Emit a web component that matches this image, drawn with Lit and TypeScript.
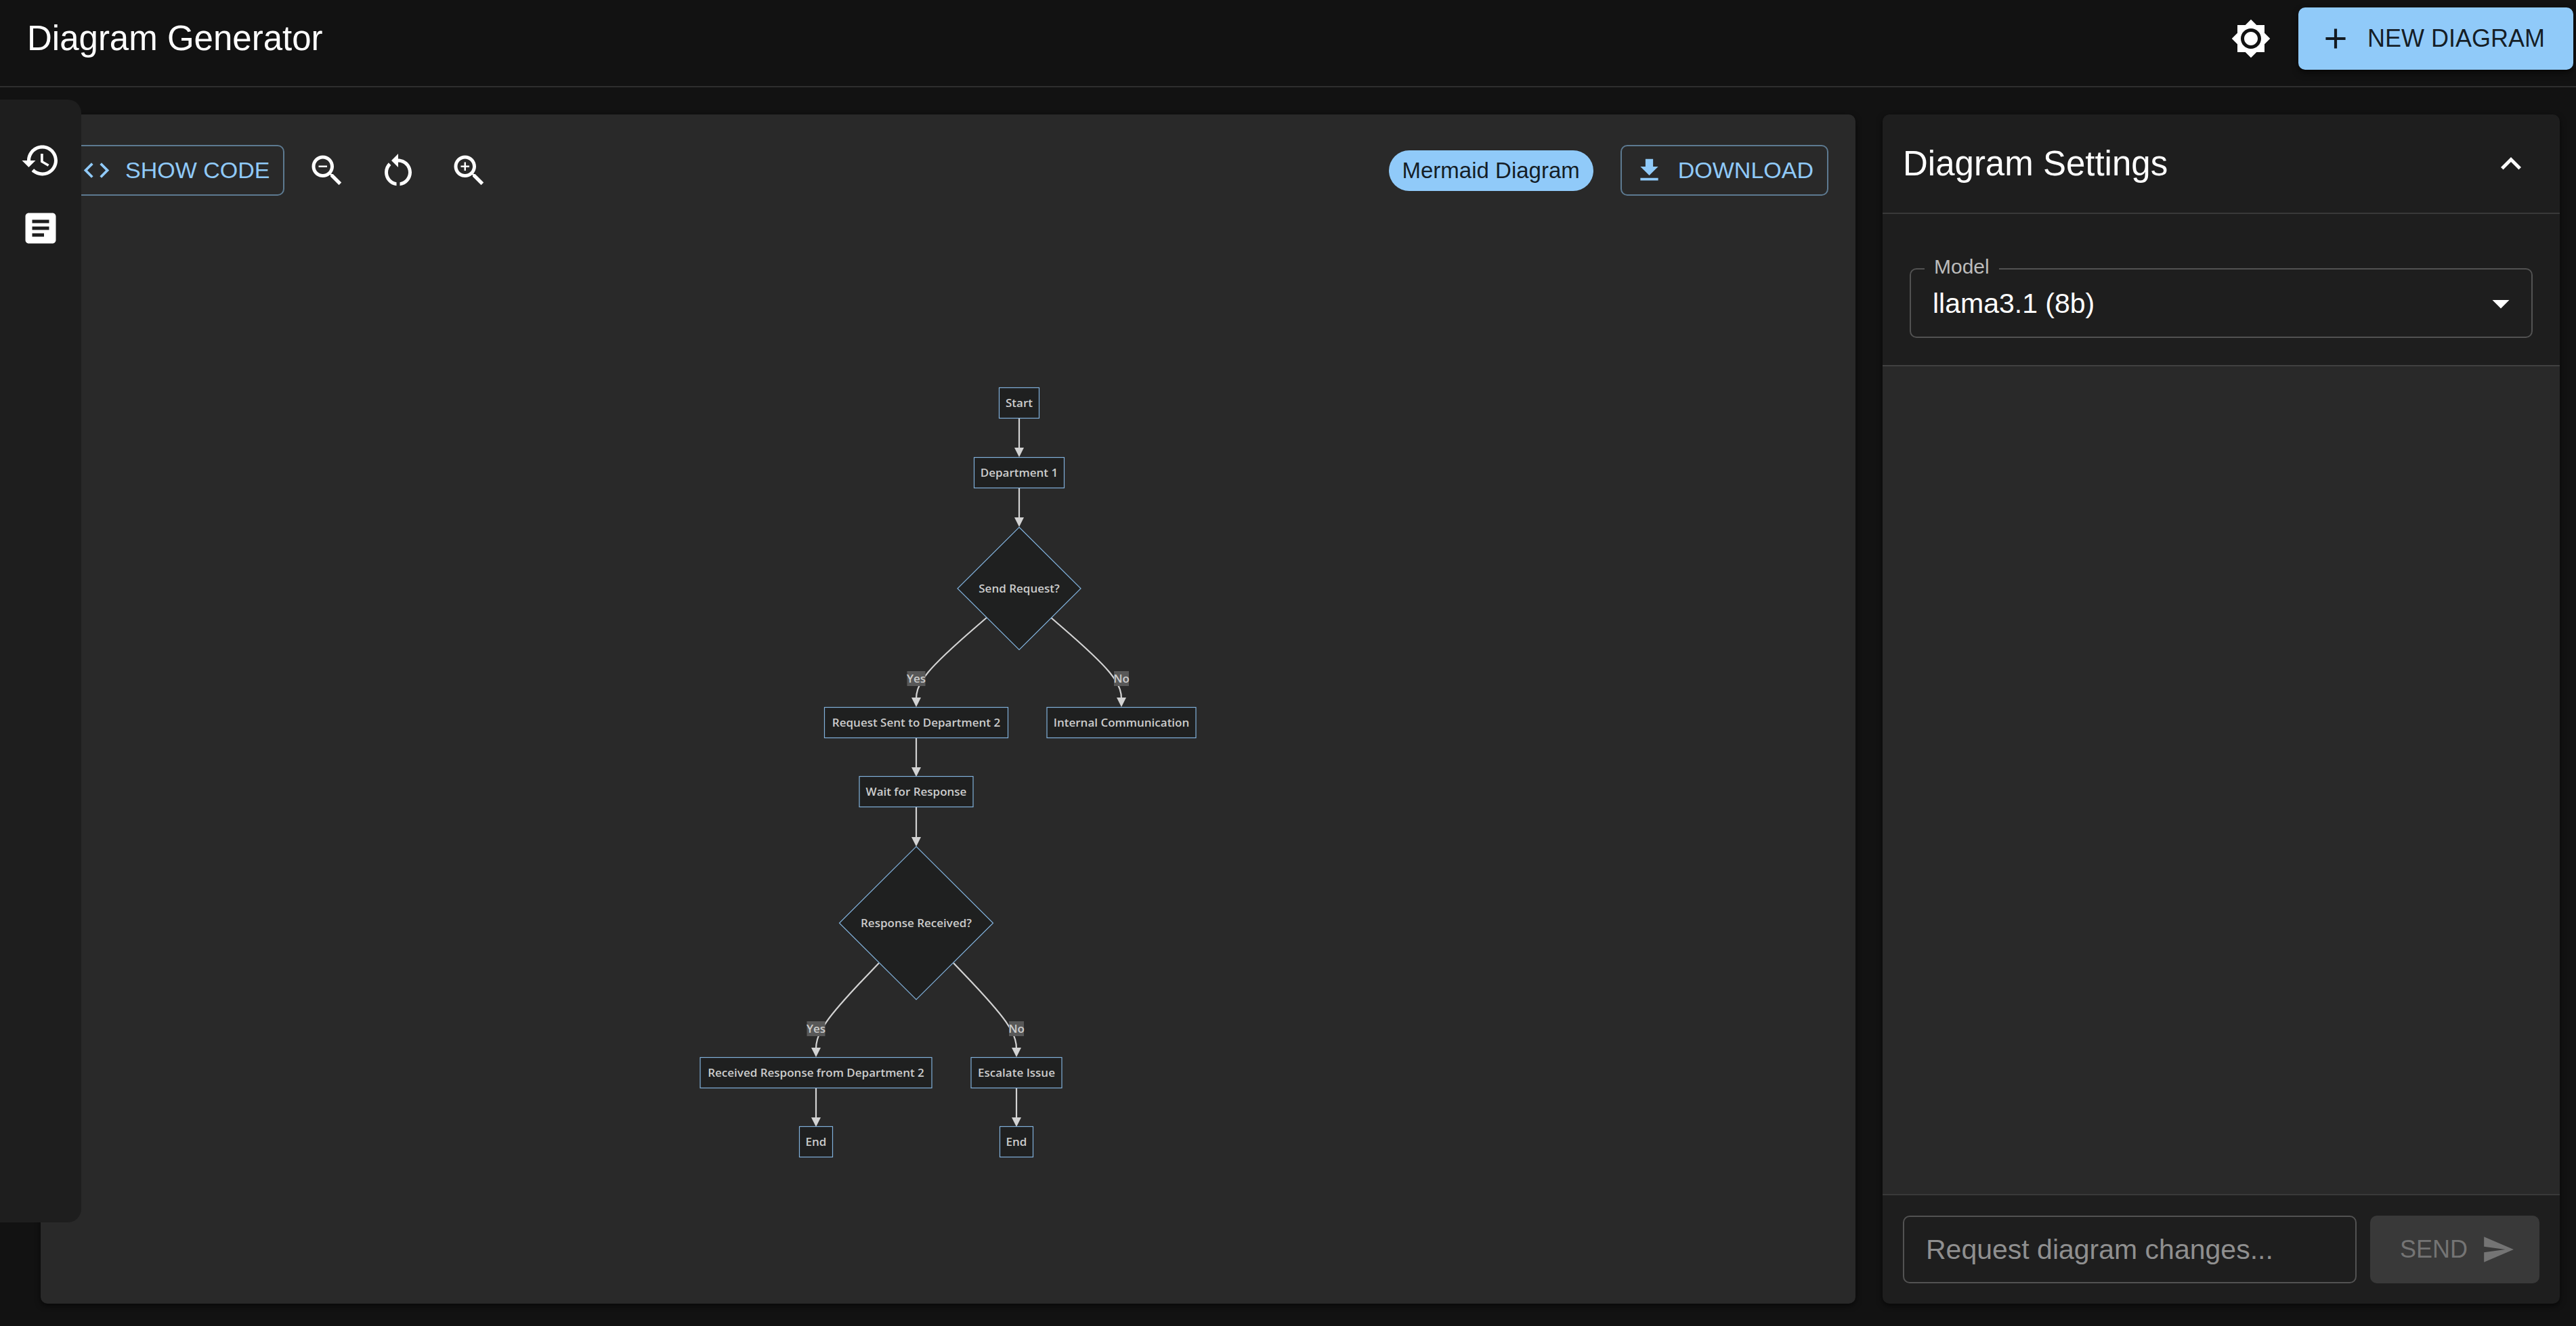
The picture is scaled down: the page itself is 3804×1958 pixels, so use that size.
import { LitElement, html, svg, css } from "lit";
import { customElement, property, state } from "lit/decorators.js";

const ICONS: Record<string, string> = {
  sun: "M20 8.69V4h-4.69L12 .69 8.69 4H4v4.69L.69 12 4 15.31V20h4.69L12 23.31 15.31 20H20v-4.69L23.31 12 20 8.69zM12 18c-3.31 0-6-2.69-6-6s2.69-6 6-6 6 2.69 6 6-2.69 6-6 6zm0-10c-2.21 0-4 1.79-4 4s1.79 4 4 4 4-1.79 4-4-1.79-4-4-4z",
  add: "M19 13h-6v6h-2v-6H5v-2h6V5h2v6h6v2z",
  history:
    "M13 3c-4.97 0-9 4.03-9 9H1l3.89 3.89.07.14L9 12H6c0-3.87 3.13-7 7-7s7 3.13 7 7-3.13 7-7 7c-1.93 0-3.68-.79-4.94-2.06l-1.42 1.42C8.27 19.99 10.51 21 13 21c4.97 0 9-4.03 9-9s-4.03-9-9-9zm-1 5v5l4.28 2.54.72-1.21-3.5-2.08V8H12z",
  article:
    "M19 3H5c-1.1 0-2 .9-2 2v14c0 1.1.9 2 2 2h14c1.1 0 2-.9 2-2V5c0-1.1-.9-2-2-2zm-5 14H7v-2h7v2zm3-4H7v-2h10v2zm0-4H7V7h10v2z",
  code: "M9.4 16.6 4.8 12l4.6-4.6L8 6l-6 6 6 6 1.4-1.4zm5.2 0 4.6-4.6-4.6-4.6L16 6l6 6-6 6-1.4-1.4z",
  zoomOut:
    "M15.5 14h-.79l-.28-.27C15.41 12.59 16 11.11 16 9.5 16 5.91 13.09 3 9.5 3S3 5.91 3 9.5 5.91 16 9.5 16c1.61 0 3.09-.59 4.23-1.57l.27.28v.79l5 4.99L20.49 19l-4.99-5zm-6 0C7.01 14 5 11.99 5 9.5S7.01 5 9.5 5 14 7.01 14 9.5 11.99 14 9.5 14zM7 9h5v1H7z",
  reset:
    "M12 5V2L8 6l4 4V7c3.31 0 6 2.69 6 6 0 2.97-2.17 5.43-5 5.91v2.02c3.95-.49 7-3.85 7-7.93 0-4.42-3.58-8-8-8zM6 13c0-1.65.67-3.15 1.76-4.24L6.34 7.34C4.9 8.79 4 10.79 4 13c0 4.08 3.05 7.44 7 7.93v-2.02c-2.83-.48-5-2.94-5-5.91z",
  zoomIn:
    "M15.5 14h-.79l-.28-.27C15.41 12.59 16 11.11 16 9.5 16 5.91 13.09 3 9.5 3S3 5.91 3 9.5 5.91 16 9.5 16c1.61 0 3.09-.59 4.23-1.57l.27.28v.79l5 4.99L20.49 19l-4.99-5zm-6 0C7.01 14 5 11.99 5 9.5S7.01 5 9.5 5 14 7.01 14 9.5 11.99 14 9.5 14zm2.5-4h-2v2H9v-2H7V9h2V7h1v2h2v1z",
  download: "M19 9h-4V3H9v6H5l7 7 7-7zM5 18v2h14v-2H5z",
  chevronUp: "M12 8l-6 6 1.41 1.41L12 10.83l4.59 4.58L18 14z",
  dropDown: "M7 10l5 5 5-5z",
  send: "M2.01 21L23 12 2.01 3 2 10l15 2-15 2z",
};

const icon = (name: string, size = "") => html`
  <svg class="icon ${size}" viewBox="0 0 24 24" aria-hidden="true">
    <path d=${ICONS[name]}></path>
  </svg>
`;

type Point = [number, number];

interface FlowNode {
  label: string;
  shape: "box" | "diamond";
  x: number;
  y: number;
  width: number;
  height: number;
}

const NODES: FlowNode[] = [
  { label: "Start", shape: "box", x: 475, y: 25, width: 59, height: 45 },
  { label: "Department 1", shape: "box", x: 475, y: 128, width: 133, height: 45 },
  { label: "Send Request?", shape: "diamond", x: 475, y: 299, width: 182, height: 181 },
  { label: "Request Sent to Department 2", shape: "box", x: 323, y: 497, width: 271, height: 45 },
  { label: "Internal Communication", shape: "box", x: 626, y: 497, width: 220, height: 45 },
  { label: "Wait for Response", shape: "box", x: 323, y: 599, width: 168, height: 45 },
  { label: "Response Received?", shape: "diamond", x: 323, y: 793, width: 227, height: 226 },
  { label: "Received Response from Department 2", shape: "box", x: 175, y: 1014, width: 342, height: 45 },
  { label: "Escalate Issue", shape: "box", x: 471, y: 1014, width: 134, height: 45 },
  { label: "End", shape: "box", x: 175, y: 1116, width: 49, height: 45 },
  { label: "End", shape: "box", x: 471, y: 1116, width: 49, height: 45 },
];

const STRAIGHT: [Point, Point][] = [
  [[475, 48], [475, 105]],
  [[475, 151], [475, 208]],
  [[323, 520], [323, 577]],
  [[323, 622], [323, 680]],
  [[175, 1036], [175, 1094]],
  [[471, 1036], [471, 1094]],
];

const BRANCHES: { label: string; width: number; points: [Point, Point, Point] }[] = [
  { label: "Yes", width: 27, points: [[427, 342], [323, 432], [323, 474]] },
  { label: "No", width: 22, points: [[522, 342], [626, 432], [626, 474]] },
  { label: "Yes", width: 27, points: [[268, 852], [175, 949], [175, 991]] },
  { label: "No", width: 22, points: [[378, 852], [471, 949], [471, 991]] },
];

/* Uniform B-spline through three control points. */
const basis = ([a, b, c]: Point[]) => {
  const mix = (...terms: [number, Point][]) => {
    const total = terms.reduce((sum, [k]) => sum + k, 0);
    return [0, 1].map((i) => terms.reduce((sum, [k, p]) => sum + k * p[i], 0) / total).join(" ");
  };
  return (
    `M${a.join(" ")} L${mix([5, a], [1, b])}` +
    ` C${mix([2, a], [1, b])} ${mix([1, a], [2, b])} ${mix([1, a], [4, b], [1, c])}` +
    ` C${mix([2, b], [1, c])} ${mix([1, b], [2, c])} ${mix([1, b], [5, c])} L${c.join(" ")}`
  );
};

@customElement("flow-chart")
export class FlowChart extends LitElement {
  static styles = css`
    :host {
      display: block;
    }
    .chart {
      display: block;
      width: 740px;
      max-width: 100%;
    }
    .shape {
      fill: #1f2020;
      stroke: #81b1db;
      stroke-width: 1.2;
    }
    .edge {
      fill: none;
      stroke: #d3d3d3;
      stroke-width: 2.2;
    }
    .head {
      fill: #d3d3d3;
    }
    .label-bg {
      fill: #585858;
    }
    .text {
      fill: #cccccc;
      font: 600 17px "Open Sans", "Noto Sans", sans-serif;
      text-anchor: middle;
    }
  `;

  private edge(path: string, [x, y]: Point) {
    return svg`
      <path class="edge" d=${path}></path>
      <path class="head" d=${`M${x - 7} ${y - 14} h14 L${x} ${y} z`}></path>
    `;
  }

  private node(n: FlowNode) {
    const w = n.width / 2;
    const h = n.height / 2;
    const shape =
      n.shape === "box"
        ? svg`<rect class="shape" x=${n.x - w} y=${n.y - h} width=${n.width} height=${n.height}></rect>`
        : svg`<polygon class="shape" points=${`${n.x},${n.y - h} ${n.x + w},${n.y} ${n.x},${n.y + h} ${n.x - w},${n.y}`}></polygon>`;
    return svg`<g>${shape}<text class="text" x=${n.x} y=${n.y + 6}>${n.label}</text></g>`;
  }

  render() {
    return html`
      <svg class="chart" viewBox="0 0 740 1142" role="img" aria-label="Flowchart">
        ${STRAIGHT.map(([a, b]) => this.edge(`M${a.join(" ")} L${b[0]} ${b[1] - 8}`, b))}
        ${BRANCHES.map(({ points: [a, b, c] }) => this.edge(basis([a, b, [c[0], c[1] - 6]]), c))}
        ${BRANCHES.map(
          ({ label, width, points: [, [x, y]] }) => svg`
            <rect class="label-bg" x=${x - width / 2} y=${y - 11} width=${width} height="22"></rect>
            <text class="text" x=${x} y=${y + 6}>${label}</text>
          `,
        )}
        ${NODES.map((n) => this.node(n))}
      </svg>
    `;
  }
}

@customElement("app-root")
export class AppRoot extends LitElement {
  @property() heading = "Diagram Generator";
  @state() private request = "";

  static styles = css`
    :host {
      display: flex;
      flex-direction: column;
      min-height: 100vh;
      background: #121212;
      color: #ffffff;
      font-family: "Liberation Sans", Arial, sans-serif;
    }
    * {
      box-sizing: border-box;
    }
    button,
    input,
    select {
      font: inherit;
      color: inherit;
      margin: 0;
    }
    button {
      display: inline-flex;
      align-items: center;
      justify-content: center;
      flex: none;
      padding: 0;
      border: 0;
      background: none;
      white-space: nowrap;
      cursor: pointer;
    }
    .icon {
      display: block;
      flex: none;
      width: 60px;
      height: 60px;
      fill: currentColor;
    }
    .icon.medium {
      width: 50px;
      height: 50px;
    }
    .icon.small {
      width: 45px;
      height: 45px;
    }
    .title {
      margin: 0;
      font-size: 51px;
      font-weight: 400;
      line-height: 80px;
    }

    .header {
      display: flex;
      align-items: center;
      gap: 20px;
      padding: 7px 4px 20px 40px;
      border-bottom: 2px solid #2e2e2e;
    }
    .header .title {
      flex: 1;
    }
    .round {
      width: 100px;
      height: 100px;
      border-radius: 50%;
    }
    .round.compact {
      width: 85px;
      height: 85px;
    }
    .primary {
      gap: 22px;
      height: 92px;
      padding: 0 42px 0 30px;
      border-radius: 10px;
      background: #90caf9;
      color: rgba(0, 0, 0, 0.87);
      font-size: 36px;
      box-shadow: 0 5px 10px rgba(0, 0, 0, 0.5);
    }

    .body {
      display: grid;
      flex: 1;
    }
    .rail {
      grid-area: 1 / 1;
      z-index: 1;
      justify-self: start;
      display: flex;
      flex-direction: column;
      align-items: center;
      width: 120px;
      margin: 18px 0 153px;
      padding-top: 40px;
      border-radius: 0 20px 20px 0;
      background: #1e1e1e;
    }
    .workspace {
      grid-area: 1 / 1;
      display: flex;
      gap: 40px;
      padding: 40px 24px 33px 60px;
    }
    .canvas,
    .settings {
      display: flex;
      flex-direction: column;
      border-radius: 10px;
      box-shadow: 0 3px 8px rgba(0, 0, 0, 0.6);
    }
    .canvas {
      flex: 1;
      min-width: 0;
      background: #292929;
    }
    .toolbar {
      display: flex;
      align-items: center;
      gap: 20px;
      padding: 40px 40px 0;
    }
    .outlined {
      gap: 20px;
      height: 75px;
      padding: 0 20px 0 18px;
      border: 2px solid #5d7a91;
      border-radius: 10px;
      color: #90caf9;
      font-size: 34px;
    }
    .export {
      display: flex;
      align-items: center;
      gap: 40px;
      margin-left: auto;
    }
    .chip {
      padding: 0 20px;
      border-radius: 30px;
      background: #90caf9;
      color: rgba(0, 0, 0, 0.87);
      font-size: 33px;
      line-height: 60px;
      white-space: nowrap;
    }
    .stage {
      flex: 1;
      display: flex;
      align-items: center;
      justify-content: center;
      padding-top: 63px;
    }

    .settings {
      width: 1000px;
      flex: none;
      background: #1e1e1e;
    }
    .settings-head {
      display: flex;
      align-items: center;
      justify-content: space-between;
      padding: 30px;
      border-bottom: 2px solid #393939;
    }
    .model {
      padding: 80px 40px 40px;
      border-bottom: 2px solid #414141;
    }
    .field {
      position: relative;
      display: flex;
      align-items: center;
      justify-content: flex-end;
    }
    .field-label {
      position: absolute;
      top: -20px;
      left: 22px;
      padding: 0 14px;
      background: #1e1e1e;
      color: #bcbcbc;
      font-size: 30px;
      line-height: 36px;
    }
    .select {
      width: 100%;
      height: 103px;
      padding: 0 80px 0 32px;
      border: 2px solid #525252;
      border-radius: 10px;
      background: transparent;
      appearance: none;
      font-size: 41px;
    }
    .field .icon {
      position: absolute;
      right: 17px;
      pointer-events: none;
    }
    .messages {
      flex: 1;
      background: #292929;
    }
    .composer {
      display: flex;
      gap: 20px;
      padding: 30px;
      border-top: 2px solid #393939;
    }
    .request {
      flex: 1;
      min-width: 0;
      height: 100px;
      padding: 0 32px;
      border: 2px solid #525252;
      border-radius: 10px;
      background: transparent;
      font-size: 41px;
    }
    .request::placeholder {
      color: #8f8f8f;
      opacity: 1;
    }
    .send {
      gap: 20px;
      width: 250px;
      padding-left: 8px;
      border-radius: 10px;
      background: #393939;
      color: #747474;
      font-size: 36px;
    }
  `;

  private onInput(e: Event) {
    this.request = (e.target as HTMLInputElement).value;
  }

  render() {
    return html`
      <header class="header">
        <h1 class="title">${this.heading}</h1>
        <button class="round" type="button" aria-label="Toggle theme">${icon("sun")}</button>
        <button class="primary" type="button">${icon("add", "medium")}NEW DIAGRAM</button>
      </header>
      <div class="body">
        <nav class="rail">
          <button class="round" type="button" aria-label="History">${icon("history")}</button>
          <button class="round" type="button" aria-label="Logs">${icon("article")}</button>
        </nav>
        <main class="workspace">
          <section class="canvas">
            <div class="toolbar">
              <button class="outlined" type="button">${icon("code", "small")}SHOW CODE</button>
              <button class="round compact" type="button" aria-label="Zoom out">${icon("zoomOut")}</button>
              <button class="round compact" type="button" aria-label="Reset zoom">${icon("reset")}</button>
              <button class="round compact" type="button" aria-label="Zoom in">${icon("zoomIn")}</button>
              <div class="export">
                <span class="chip">Mermaid Diagram</span>
                <button class="outlined" type="button">${icon("download", "small")}DOWNLOAD</button>
              </div>
            </div>
            <div class="stage"><flow-chart></flow-chart></div>
          </section>
          <aside class="settings">
            <div class="settings-head">
              <h2 class="title">Diagram Settings</h2>
              <button class="round compact" type="button" aria-label="Collapse settings">
                ${icon("chevronUp")}
              </button>
            </div>
            <div class="model">
              <div class="field">
                <label class="field-label" for="model">Model</label>
                <select class="select" id="model">
                  <option>llama3.1 (8b)</option>
                </select>
                ${icon("dropDown")}
              </div>
            </div>
            <div class="messages"></div>
            <form class="composer" @submit=${(e: Event) => e.preventDefault()}>
              <input
                class="request"
                type="text"
                aria-label="Request diagram changes"
                placeholder="Request diagram changes..."
                .value=${this.request}
                @input=${this.onInput}
              />
              <button class="send" type="submit" ?disabled=${!this.request}>
                SEND${icon("send", "medium")}
              </button>
            </form>
          </aside>
        </main>
      </div>
    `;
  }
}
